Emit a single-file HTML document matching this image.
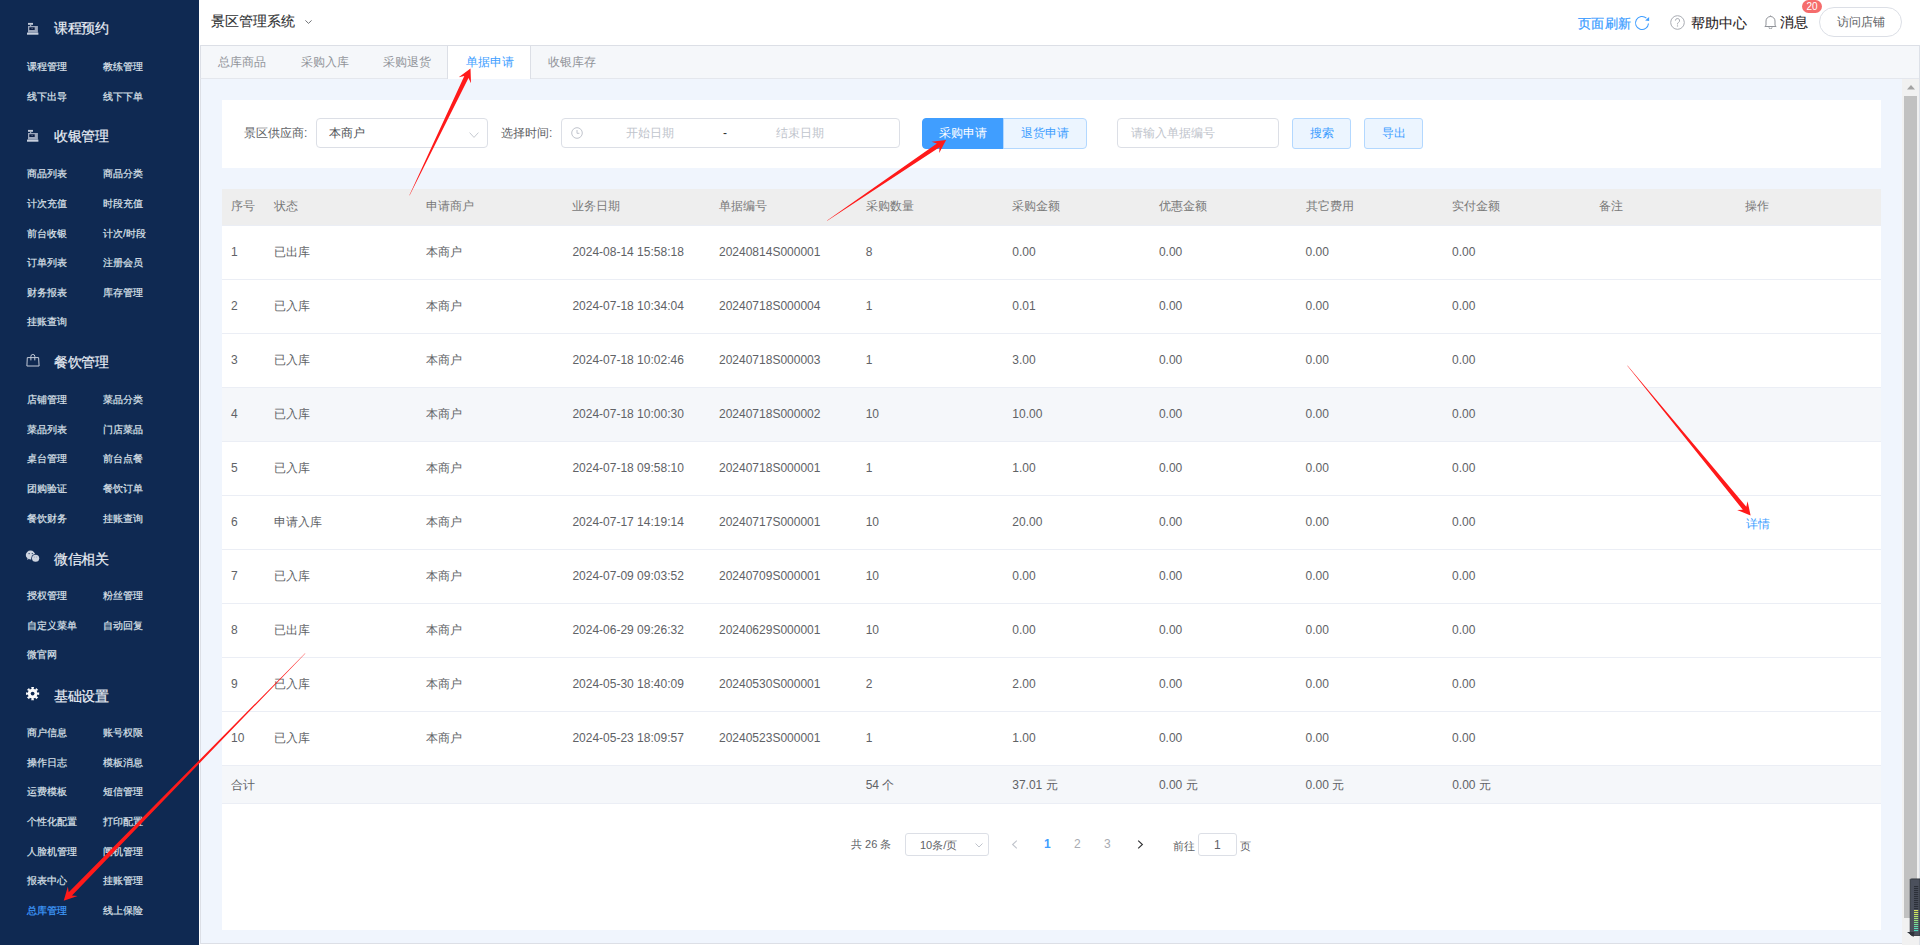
<!DOCTYPE html>
<html><head><meta charset="utf-8">
<style>
*{box-sizing:border-box;margin:0;padding:0}
html,body{width:1920px;height:945px;overflow:hidden;font-family:"Liberation Sans",sans-serif;background:#fff}
.abs{position:absolute}
#side{position:absolute;left:0;top:0;width:199px;height:945px;background:#0f2952}
.gt{position:absolute;left:54px;height:20px;line-height:20px;font-size:14px;transform:scale(0.972);transform-origin:0 50%;color:#e9edf4;-webkit-text-stroke:0.2px #e9edf4;white-space:nowrap}
.gt .gic{display:inline-block;width:27px;height:20px;vertical-align:top;position:relative}
.gt .gi{position:absolute;left:0;top:4px}
.si{position:absolute;font-size:10px;line-height:16px;color:#dde2ea;-webkit-text-stroke:0.2px #dde2ea;white-space:nowrap}
.si.act{color:#409eff;-webkit-text-stroke:0.2px #409eff}
#hdr{position:absolute;left:199px;top:0;width:1721px;height:45px;background:#fff}
#main{position:absolute;left:200px;top:45px;width:1702px;height:899px;background:#f0f5fd;border-left:1px solid #dcdfe6}
#tabs{position:absolute;left:200px;top:45px;width:1720px;height:34px;background:#f5f7fa;border-top:1px solid #dcdfe6;border-bottom:1px solid #e4e7ed;border-left:1px solid #dcdfe6}
.tab{position:absolute;top:54px;font-size:12px;line-height:16px;color:#909399;white-space:nowrap}
.card{position:absolute;background:#fff}
.lbl{position:absolute;font-size:12px;line-height:16px;color:#606266;white-space:nowrap}
.inp{position:absolute;border:1px solid #dcdfe6;border-radius:4px;background:#fff}
.ph{position:absolute;font-size:12px;line-height:16px;color:#c0c4cc;white-space:nowrap}
.btn{position:absolute;font-size:12px;line-height:16px;white-space:nowrap;text-align:center}
.thead{position:absolute;left:222px;width:1659px;background:#eeeeee;border-bottom:1px solid #ebeef5}
.th{position:absolute;font-size:12px;line-height:16px;color:#797979;white-space:nowrap;font-weight:normal}
.tr{position:absolute;left:222px;width:1659px;height:54px;background:#fff;border-bottom:1px solid #ebeef5}
.tr.hov{background:#f5f7fa}
.td{position:absolute;font-size:12px;line-height:16px;color:#606266;white-space:nowrap}
.td.link{color:#409eff}
.sum{position:absolute;left:222px;width:1659px;height:38px;background:#f5f7fa;border-bottom:1px solid #ebeef5}
.hs{-webkit-text-stroke:0.1px currentColor}
.pg{position:absolute;font-size:12px;line-height:16px;color:#606266;white-space:nowrap}
</style></head><body>
<div id="side">
<svg class="abs" style="left:22px;top:16.1px" width="24" height="24" viewBox="0 0 24 24"><rect x="6" y="6.9" width="5" height="1.9" fill="#c3cad8"/><rect x="8.2" y="8.8" width="1" height="1.3" fill="#c3cad8"/><rect x="6" y="10" width="9.9" height="6.6" fill="#9ba6bb"/><rect x="7.3" y="11.3" width="5.4" height="2.7" fill="#0b1e45"/><rect x="9.6" y="12.2" width="1" height="0.8" fill="#7f8aa0"/><rect x="5" y="16.6" width="11.4" height="2.1" fill="#c8d0de"/></svg>
<div class="gt" style="top:18.1px">课程预约</div>
<div class="si" style="left:27px;top:59.1px">课程管理</div>
<div class="si" style="left:103px;top:59.1px">教练管理</div>
<div class="si" style="left:27px;top:88.7px">线下出导</div>
<div class="si" style="left:103px;top:88.7px">线下下单</div>
<svg class="abs" style="left:22px;top:123.4px" width="24" height="24" viewBox="0 0 24 24"><rect x="6" y="6.9" width="5" height="1.9" fill="#c3cad8"/><rect x="8.2" y="8.8" width="1" height="1.3" fill="#c3cad8"/><rect x="6" y="10" width="9.9" height="6.6" fill="#9ba6bb"/><rect x="7.3" y="11.3" width="5.4" height="2.7" fill="#0b1e45"/><rect x="9.6" y="12.2" width="1" height="0.8" fill="#7f8aa0"/><rect x="5" y="16.6" width="11.4" height="2.1" fill="#c8d0de"/></svg>
<div class="gt" style="top:126.3px">收银管理</div>
<div class="si" style="left:27px;top:166.4px">商品列表</div>
<div class="si" style="left:103px;top:166.4px">商品分类</div>
<div class="si" style="left:27px;top:196.0px">计次充值</div>
<div class="si" style="left:103px;top:196.0px">时段充值</div>
<div class="si" style="left:27px;top:225.6px">前台收银</div>
<div class="si" style="left:103px;top:225.6px">计次/时段</div>
<div class="si" style="left:27px;top:255.2px">订单列表</div>
<div class="si" style="left:103px;top:255.2px">注册会员</div>
<div class="si" style="left:27px;top:284.8px">财务报表</div>
<div class="si" style="left:103px;top:284.8px">库存管理</div>
<div class="si" style="left:27px;top:314.4px">挂账查询</div>
<svg class="abs" style="left:22px;top:349.1px" width="24" height="24" viewBox="0 0 24 24"><path d="M5.3 8.6H16.6L17.1 17H4.9Z" fill="none" stroke="#c3cad8" stroke-width="1"/><path d="M8.9 11.4V7.4A1.95 1.95 0 0 1 12.8 7.4V11.4" fill="none" stroke="#c3cad8" stroke-width="1"/></svg>
<div class="gt" style="top:351.5px">餐饮管理</div>
<div class="si" style="left:27px;top:392.1px">店铺管理</div>
<div class="si" style="left:103px;top:392.1px">菜品分类</div>
<div class="si" style="left:27px;top:421.7px">菜品列表</div>
<div class="si" style="left:103px;top:421.7px">门店菜品</div>
<div class="si" style="left:27px;top:451.3px">桌台管理</div>
<div class="si" style="left:103px;top:451.3px">前台点餐</div>
<div class="si" style="left:27px;top:480.9px">团购验证</div>
<div class="si" style="left:103px;top:480.9px">餐饮订单</div>
<div class="si" style="left:27px;top:510.5px">餐饮财务</div>
<div class="si" style="left:103px;top:510.5px">挂账查询</div>
<svg class="abs" style="left:22px;top:545.2px" width="24" height="24" viewBox="0 0 24 24"><ellipse cx="8.5" cy="10" rx="4.7" ry="4.4" fill="#cdd4e0"/><path d="M5.5 13.2L5 14.8L7.5 13.8z" fill="#cdd4e0"/><ellipse cx="13.6" cy="13.2" rx="4.3" ry="4.1" fill="#0f2952"/><ellipse cx="13.6" cy="13.2" rx="3.6" ry="3.5" fill="#cdd4e0"/><circle cx="7.1" cy="8.6" r="0.6" fill="#0f2952"/><circle cx="10.3" cy="8.6" r="0.6" fill="#0f2952"/><circle cx="12.3" cy="12.1" r="0.5" fill="#8c96aa"/><circle cx="14.7" cy="12.1" r="0.5" fill="#8c96aa"/></svg>
<div class="gt" style="top:548.5px">微信相关</div>
<div class="si" style="left:27px;top:588.2px">授权管理</div>
<div class="si" style="left:103px;top:588.2px">粉丝管理</div>
<div class="si" style="left:27px;top:617.8px">自定义菜单</div>
<div class="si" style="left:103px;top:617.8px">自动回复</div>
<div class="si" style="left:27px;top:647.4px">微官网</div>
<svg class="abs" style="left:22px;top:682.1px" width="24" height="24" viewBox="0 0 24 24"><polygon fill="#fbfbfc" points="9.14,5.06 12.06,5.06 11.54,6.79 13.34,7.54 14.19,5.94 16.26,8.01 14.66,8.86 15.41,10.66 17.14,10.14 17.14,13.06 15.41,12.54 14.66,14.34 16.26,15.19 14.19,17.26 13.34,15.66 11.54,16.41 12.06,18.14 9.14,18.14 9.66,16.41 7.86,15.66 7.01,17.26 4.94,15.19 6.54,14.34 5.79,12.54 4.06,13.06 4.06,10.14 5.79,10.66 6.54,8.86 4.94,8.01 7.01,5.94 7.86,7.54 9.66,6.79"/><circle cx="10.6" cy="11.6" r="1.9" fill="#0f2952"/></svg>
<div class="gt" style="top:685.5px">基础设置</div>
<div class="si" style="left:27px;top:725.1px">商户信息</div>
<div class="si" style="left:103px;top:725.1px">账号权限</div>
<div class="si" style="left:27px;top:754.7px">操作日志</div>
<div class="si" style="left:103px;top:754.7px">模板消息</div>
<div class="si" style="left:27px;top:784.3px">运费模板</div>
<div class="si" style="left:103px;top:784.3px">短信管理</div>
<div class="si" style="left:27px;top:813.9px">个性化配置</div>
<div class="si" style="left:103px;top:813.9px">打印配置</div>
<div class="si" style="left:27px;top:843.5px">人脸机管理</div>
<div class="si" style="left:103px;top:843.5px">闸机管理</div>
<div class="si" style="left:27px;top:873.1px">报表中心</div>
<div class="si" style="left:103px;top:873.1px">挂账管理</div>
<div class="si act" style="left:27px;top:902.7px">总库管理</div>
<div class="si" style="left:103px;top:902.7px">线上保险</div>
</div>
<div id="hdr">
  <div class="abs hs" style="left:12px;top:11px;font-size:14px;line-height:20px;color:#303133;white-space:nowrap">景区管理系统</div>
  <svg class="abs" style="left:105.5px;top:20px" width="7" height="4" viewBox="0 0 7 4"><path d="M0.4 0.4L3.5 3.4L6.6 0.4" fill="none" stroke="#606266" stroke-width="0.9"/></svg>
  <div class="abs hs" style="left:1378.8px;top:13px;font-size:14px;line-height:20px;color:#409eff;white-space:nowrap;transform:scale(0.958);transform-origin:0 50%;-webkit-text-stroke:0.25px #409eff">页面刷新</div>
  <svg class="abs" style="left:1435px;top:15px" width="16" height="16" viewBox="0 0 16 16"><path d="M14.5 8.5A6.5 6.5 0 1 1 12.4 3.2" fill="none" stroke="#409eff" stroke-width="1.1"/><path d="M15.1 1.9L15.1 5.9L11.1 5.6Z" fill="#409eff"/></svg>
  <svg class="abs" style="left:1471px;top:15px" width="15" height="15" viewBox="0 0 15 15"><circle cx="7.5" cy="7.5" r="6.8" fill="none" stroke="#a8abb2" stroke-width="1"/><path d="M5.4 5.6a2.1 2.1 0 1 1 3 1.9c-.6.3-.9.7-.9 1.3v.6" fill="none" stroke="#a8abb2" stroke-width="1"/><circle cx="7.5" cy="10.9" r="0.7" fill="#a8abb2"/></svg>
  <div class="abs hs" style="left:1492px;top:13px;font-size:14px;line-height:20px;color:#1f2022;white-space:nowrap">帮助中心</div>
  <svg class="abs" style="left:1565px;top:15px" width="13" height="14" viewBox="0 0 13 14"><path d="M2 10.5V6a4.5 4.5 0 0 1 9 0v4.5l1.2 1H0.8z" fill="none" stroke="#909399" stroke-width="1"/><path d="M5 12.3a1.5 1.5 0 0 0 3 0" fill="none" stroke="#909399" stroke-width="1"/><path d="M6.5 0.5v1" stroke="#909399"/></svg>
  <div class="abs hs" style="left:1581px;top:12px;font-size:14px;line-height:20px;color:#1f2022;white-space:nowrap">消息</div>
  <div class="abs" style="left:1603px;top:0px;width:20px;height:13px;border-radius:7px;background:#f56c6c;color:#fff;font-size:10px;line-height:13px;text-align:center">20</div>
  <div class="abs" style="left:1620px;top:7px;width:83px;height:30px;border:1px solid #dcdfe6;border-radius:15px;font-size:12px;line-height:28px;color:#606266;text-align:center">访问店铺</div>
</div>
<div id="main"></div>
<div id="tabs"></div>
<div class="abs" style="left:447px;top:45px;width:84px;height:34px;background:#fff;border-left:1px solid #dcdfe6;border-right:1px solid #dcdfe6;border-top:1px solid #dcdfe6"></div>
<div class="tab" style="left:218px">总库商品</div>
<div class="tab" style="left:301px">采购入库</div>
<div class="tab" style="left:383px">采购退货</div>
<div class="tab" style="left:466px;color:#409eff">单据申请</div>
<div class="tab" style="left:548px">收银库存</div>

<div class="card" style="left:222px;top:100px;width:1659px;height:68px"></div>
<div class="lbl" style="left:244px;top:125px">景区供应商:</div>
<div class="inp" style="left:316px;top:118px;width:172px;height:30px"></div>
<div class="lbl" style="left:329px;top:125px;color:#4d4f55">本商户</div>
<svg class="abs" style="left:468.5px;top:132px" width="10" height="7" viewBox="0 0 10 7"><path d="M0.6 0.6L5 5.4L9.4 0.6" fill="none" stroke="#c0c4cc" stroke-width="0.9"/></svg>
<div class="lbl" style="left:501px;top:125px">选择时间:</div>
<div class="inp" style="left:561px;top:118px;width:339px;height:30px"></div>
<svg class="abs" style="left:571px;top:127px" width="12" height="12" viewBox="0 0 12 12"><circle cx="6" cy="6" r="5.3" fill="none" stroke="#c0c4cc" stroke-width="1"/><path d="M6 3v3.3h2.4" fill="none" stroke="#c0c4cc" stroke-width="1"/></svg>
<div class="ph" style="left:626px;top:125px">开始日期</div>
<div class="lbl" style="left:723px;top:125px;color:#303133">-</div>
<div class="ph" style="left:776px;top:125px">结束日期</div>
<div class="btn" style="left:922px;top:118px;width:82px;height:31px;background:#409eff;border:1px solid #409eff;border-radius:4px 0 0 4px;color:#fff;line-height:29px">采购申请</div>
<div class="btn" style="left:1003px;top:118px;width:84px;height:31px;background:#ecf5ff;border:1px solid #b3d8ff;border-radius:0 4px 4px 0;color:#409eff;line-height:29px">退货申请</div>
<div class="inp" style="left:1117px;top:118px;width:162px;height:30px"></div>
<div class="ph" style="left:1131px;top:125px">请输入单据编号</div>
<div class="btn" style="left:1292px;top:118px;width:59px;height:31px;background:#ecf5ff;border:1px solid #b3d8ff;border-radius:3px;color:#409eff;line-height:29px">搜索</div>
<div class="btn" style="left:1364px;top:118px;width:59px;height:31px;background:#ecf5ff;border:1px solid #b3d8ff;border-radius:3px;color:#409eff;line-height:29px">导出</div>

<div class="thead" style="top:189px;height:37px"></div>
<div class="th" style="left:231px;top:198px">序号</div>
<div class="th" style="left:274.2px;top:198px">状态</div>
<div class="th" style="left:425.8px;top:198px">申请商户</div>
<div class="th" style="left:572.4200000000001px;top:198px">业务日期</div>
<div class="th" style="left:719.04px;top:198px">单据编号</div>
<div class="th" style="left:865.6600000000001px;top:198px">采购数量</div>
<div class="th" style="left:1012.28px;top:198px">采购金额</div>
<div class="th" style="left:1158.9px;top:198px">优惠金额</div>
<div class="th" style="left:1305.52px;top:198px">其它费用</div>
<div class="th" style="left:1452.14px;top:198px">实付金额</div>
<div class="th" style="left:1598.76px;top:198px">备注</div>
<div class="th" style="left:1745.3799999999999px;top:198px">操作</div>
<div class="tr" style="top:226px"></div>
<div class="td" style="left:231.0px;top:244px">1</div>
<div class="td" style="left:274.2px;top:244px">已出库</div>
<div class="td" style="left:425.8px;top:244px">本商户</div>
<div class="td" style="left:572.4px;top:244px">2024-08-14 15:58:18</div>
<div class="td" style="left:719.0px;top:244px">20240814S000001</div>
<div class="td" style="left:865.7px;top:244px">8</div>
<div class="td" style="left:1012.3px;top:244px">0.00</div>
<div class="td" style="left:1158.9px;top:244px">0.00</div>
<div class="td" style="left:1305.5px;top:244px">0.00</div>
<div class="td" style="left:1452.1px;top:244px">0.00</div>
<div class="tr" style="top:280px"></div>
<div class="td" style="left:231.0px;top:298px">2</div>
<div class="td" style="left:274.2px;top:298px">已入库</div>
<div class="td" style="left:425.8px;top:298px">本商户</div>
<div class="td" style="left:572.4px;top:298px">2024-07-18 10:34:04</div>
<div class="td" style="left:719.0px;top:298px">20240718S000004</div>
<div class="td" style="left:865.7px;top:298px">1</div>
<div class="td" style="left:1012.3px;top:298px">0.01</div>
<div class="td" style="left:1158.9px;top:298px">0.00</div>
<div class="td" style="left:1305.5px;top:298px">0.00</div>
<div class="td" style="left:1452.1px;top:298px">0.00</div>
<div class="tr" style="top:334px"></div>
<div class="td" style="left:231.0px;top:352px">3</div>
<div class="td" style="left:274.2px;top:352px">已入库</div>
<div class="td" style="left:425.8px;top:352px">本商户</div>
<div class="td" style="left:572.4px;top:352px">2024-07-18 10:02:46</div>
<div class="td" style="left:719.0px;top:352px">20240718S000003</div>
<div class="td" style="left:865.7px;top:352px">1</div>
<div class="td" style="left:1012.3px;top:352px">3.00</div>
<div class="td" style="left:1158.9px;top:352px">0.00</div>
<div class="td" style="left:1305.5px;top:352px">0.00</div>
<div class="td" style="left:1452.1px;top:352px">0.00</div>
<div class="tr hov" style="top:388px"></div>
<div class="td" style="left:231.0px;top:406px">4</div>
<div class="td" style="left:274.2px;top:406px">已入库</div>
<div class="td" style="left:425.8px;top:406px">本商户</div>
<div class="td" style="left:572.4px;top:406px">2024-07-18 10:00:30</div>
<div class="td" style="left:719.0px;top:406px">20240718S000002</div>
<div class="td" style="left:865.7px;top:406px">10</div>
<div class="td" style="left:1012.3px;top:406px">10.00</div>
<div class="td" style="left:1158.9px;top:406px">0.00</div>
<div class="td" style="left:1305.5px;top:406px">0.00</div>
<div class="td" style="left:1452.1px;top:406px">0.00</div>
<div class="tr" style="top:442px"></div>
<div class="td" style="left:231.0px;top:460px">5</div>
<div class="td" style="left:274.2px;top:460px">已入库</div>
<div class="td" style="left:425.8px;top:460px">本商户</div>
<div class="td" style="left:572.4px;top:460px">2024-07-18 09:58:10</div>
<div class="td" style="left:719.0px;top:460px">20240718S000001</div>
<div class="td" style="left:865.7px;top:460px">1</div>
<div class="td" style="left:1012.3px;top:460px">1.00</div>
<div class="td" style="left:1158.9px;top:460px">0.00</div>
<div class="td" style="left:1305.5px;top:460px">0.00</div>
<div class="td" style="left:1452.1px;top:460px">0.00</div>
<div class="tr" style="top:496px"></div>
<div class="td" style="left:231.0px;top:514px">6</div>
<div class="td" style="left:274.2px;top:514px">申请入库</div>
<div class="td" style="left:425.8px;top:514px">本商户</div>
<div class="td" style="left:572.4px;top:514px">2024-07-17 14:19:14</div>
<div class="td" style="left:719.0px;top:514px">20240717S000001</div>
<div class="td" style="left:865.7px;top:514px">10</div>
<div class="td" style="left:1012.3px;top:514px">20.00</div>
<div class="td" style="left:1158.9px;top:514px">0.00</div>
<div class="td" style="left:1305.5px;top:514px">0.00</div>
<div class="td" style="left:1452.1px;top:514px">0.00</div>
<div class="td link" style="left:1745.9px;top:516px">详情</div>
<div class="tr" style="top:550px"></div>
<div class="td" style="left:231.0px;top:568px">7</div>
<div class="td" style="left:274.2px;top:568px">已入库</div>
<div class="td" style="left:425.8px;top:568px">本商户</div>
<div class="td" style="left:572.4px;top:568px">2024-07-09 09:03:52</div>
<div class="td" style="left:719.0px;top:568px">20240709S000001</div>
<div class="td" style="left:865.7px;top:568px">10</div>
<div class="td" style="left:1012.3px;top:568px">0.00</div>
<div class="td" style="left:1158.9px;top:568px">0.00</div>
<div class="td" style="left:1305.5px;top:568px">0.00</div>
<div class="td" style="left:1452.1px;top:568px">0.00</div>
<div class="tr" style="top:604px"></div>
<div class="td" style="left:231.0px;top:622px">8</div>
<div class="td" style="left:274.2px;top:622px">已出库</div>
<div class="td" style="left:425.8px;top:622px">本商户</div>
<div class="td" style="left:572.4px;top:622px">2024-06-29 09:26:32</div>
<div class="td" style="left:719.0px;top:622px">20240629S000001</div>
<div class="td" style="left:865.7px;top:622px">10</div>
<div class="td" style="left:1012.3px;top:622px">0.00</div>
<div class="td" style="left:1158.9px;top:622px">0.00</div>
<div class="td" style="left:1305.5px;top:622px">0.00</div>
<div class="td" style="left:1452.1px;top:622px">0.00</div>
<div class="tr" style="top:658px"></div>
<div class="td" style="left:231.0px;top:676px">9</div>
<div class="td" style="left:274.2px;top:676px">已入库</div>
<div class="td" style="left:425.8px;top:676px">本商户</div>
<div class="td" style="left:572.4px;top:676px">2024-05-30 18:40:09</div>
<div class="td" style="left:719.0px;top:676px">20240530S000001</div>
<div class="td" style="left:865.7px;top:676px">2</div>
<div class="td" style="left:1012.3px;top:676px">2.00</div>
<div class="td" style="left:1158.9px;top:676px">0.00</div>
<div class="td" style="left:1305.5px;top:676px">0.00</div>
<div class="td" style="left:1452.1px;top:676px">0.00</div>
<div class="tr" style="top:712px"></div>
<div class="td" style="left:231.0px;top:730px">10</div>
<div class="td" style="left:274.2px;top:730px">已入库</div>
<div class="td" style="left:425.8px;top:730px">本商户</div>
<div class="td" style="left:572.4px;top:730px">2024-05-23 18:09:57</div>
<div class="td" style="left:719.0px;top:730px">20240523S000001</div>
<div class="td" style="left:865.7px;top:730px">1</div>
<div class="td" style="left:1012.3px;top:730px">1.00</div>
<div class="td" style="left:1158.9px;top:730px">0.00</div>
<div class="td" style="left:1305.5px;top:730px">0.00</div>
<div class="td" style="left:1452.1px;top:730px">0.00</div>
<div class="sum" style="top:766px"></div>
<div class="td" style="left:231px;top:777px">合计</div>
<div class="td" style="left:865.6600000000001px;top:777px">54 个</div>
<div class="td" style="left:1012.28px;top:777px">37.01 元</div>
<div class="td" style="left:1158.9px;top:777px">0.00 元</div>
<div class="td" style="left:1305.52px;top:777px">0.00 元</div>
<div class="td" style="left:1452.14px;top:777px">0.00 元</div>

<div class="card" style="left:222px;top:804px;width:1659px;height:126px"></div>
<div class="pg" style="left:851px;top:836px;font-size:11px">共 26 条</div>
<div class="inp" style="left:905px;top:833px;width:84px;height:23px;border-radius:3px"></div>
<div class="pg" style="left:920px;top:837px;color:#606266;font-size:11px">10条/页</div>
<svg class="abs" style="left:975px;top:843px" width="8" height="5" viewBox="0 0 8 5"><path d="M0.5 0.5L4 4L7.5 0.5" fill="none" stroke="#c0c4cc" stroke-width="1"/></svg>
<svg class="abs" style="left:1011px;top:840px" width="7" height="9" viewBox="0 0 7 9"><path d="M5.8 0.6L1.6 4.5L5.8 8.4" fill="none" stroke="#c0c4cc" stroke-width="1.1"/></svg>
<div class="pg" style="left:1044px;top:836px;color:#409eff;font-weight:bold">1</div>
<div class="pg" style="left:1074px;top:836px;color:#a8abb2">2</div>
<div class="pg" style="left:1104px;top:836px;color:#a8abb2">3</div>
<svg class="abs" style="left:1137px;top:840px" width="7" height="9" viewBox="0 0 7 9"><path d="M1.2 0.6L5.4 4.5L1.2 8.4" fill="none" stroke="#303133" stroke-width="1.1"/></svg>
<div class="pg" style="left:1173px;top:838px;font-size:11px">前往</div>
<div class="inp" style="left:1198px;top:833px;width:39px;height:23px;border-radius:3px"></div>
<div class="pg" style="left:1214px;top:837px">1</div>
<div class="pg" style="left:1240px;top:838px;font-size:11px">页</div>

<!-- scrollbar -->
<div class="abs" style="left:1902px;top:79px;width:18px;height:866px;background:#f1f1f1"></div>
<svg class="abs" style="left:1906px;top:84px" width="10" height="6" viewBox="0 0 10 6"><path d="M1 5.5L5 1L9 5.5z" fill="#a3a3a3"/></svg>
<div class="abs" style="left:1904px;top:96px;width:13px;height:822px;background:#c1c1c1"></div>
<div class="abs" style="left:1919px;top:45px;width:1px;height:900px;background:#dde1e8"></div>
<div class="abs" style="left:200px;top:943px;width:1702px;height:1px;background:#dcdfe6"></div>

<!-- widget -->
<svg class="abs" style="left:1905px;top:870px" width="15" height="75" viewBox="0 0 15 75"><path d="M5.2 9.4Q5.2 8.9 6.5 8.9H15V65.5H7.5Q5.2 65.5 5.2 63.5Z" fill="#4b505c" stroke="#2a2e36" stroke-width="0.8"/><rect x="9" y="16" width="4.2" height="1.1" fill="#2c3039"/><rect x="9" y="18" width="4.2" height="1.1" fill="#2c3039"/><rect x="9" y="20" width="4.2" height="1.1" fill="#2c3039"/><rect x="9" y="22" width="4.2" height="1.1" fill="#2c3039"/><rect x="9" y="24" width="4.2" height="1.1" fill="#2c3039"/><rect x="9" y="26" width="4.2" height="1.1" fill="#2c3039"/><rect x="9" y="28" width="4.2" height="1.1" fill="#2c3039"/><rect x="9" y="30" width="4.2" height="1.1" fill="#2c3039"/><rect x="9" y="32" width="4.2" height="1.1" fill="#2c3039"/><rect x="9" y="34" width="4.2" height="1.1" fill="#2c3039"/><rect x="9" y="36" width="4.2" height="1.1" fill="#2c3039"/><rect x="9" y="38" width="4.2" height="1.1" fill="#2c3039"/><rect x="9" y="40" width="4.2" height="1.1" fill="#d9e55a"/><rect x="9" y="42" width="4.2" height="1.1" fill="#d2e65e"/><rect x="9" y="44" width="4.2" height="1.1" fill="#c6e664"/><rect x="9" y="46" width="4.2" height="1.1" fill="#b6e46c"/><rect x="9" y="48" width="4.2" height="1.1" fill="#a5e274"/><rect x="9" y="50" width="4.2" height="1.1" fill="#95e07c"/><rect x="9" y="52" width="4.2" height="1.1" fill="#84de88"/><rect x="9" y="54" width="4.2" height="1.1" fill="#74dd98"/><rect x="9" y="56" width="4.2" height="1.1" fill="#66dca8"/><rect x="9" y="58" width="4.2" height="1.1" fill="#5adcb6"/><rect x="9" y="60" width="4.2" height="1.1" fill="#50dcc0"/><path d="M2 62L9.5 62L8.5 67Z" fill="#2f333b"/></svg>

<!-- arrows -->
<svg class="abs" style="left:0;top:0" width="1920" height="945" viewBox="0 0 1920 945">
<polygon fill="#ff1a1a" points="409.4,195.2 464.3,76.1 458.7,77.3 470.5,68.5 471.0,83.2 468.5,78.1 409.6,195.4"/>
<polygon fill="#ff1a1a" points="827.1,220.5 936.9,143.4 931.5,141.7 946.1,140.0 939.2,152.9 939.5,147.2 827.3,220.7"/>
<polygon fill="#ff1a1a" points="1627.5,365.5 1746.3,506.8 1747.6,501.2 1750.6,515.6 1737.1,509.9 1742.8,509.7 1627.3,365.7"/>
<polygon fill="#ff1a1a" points="305.3,653.4 72.0,895.5 77.6,896.1 63.7,900.7 67.9,886.6 68.7,892.3 305.1,653.2"/>
</svg>
</body></html>
